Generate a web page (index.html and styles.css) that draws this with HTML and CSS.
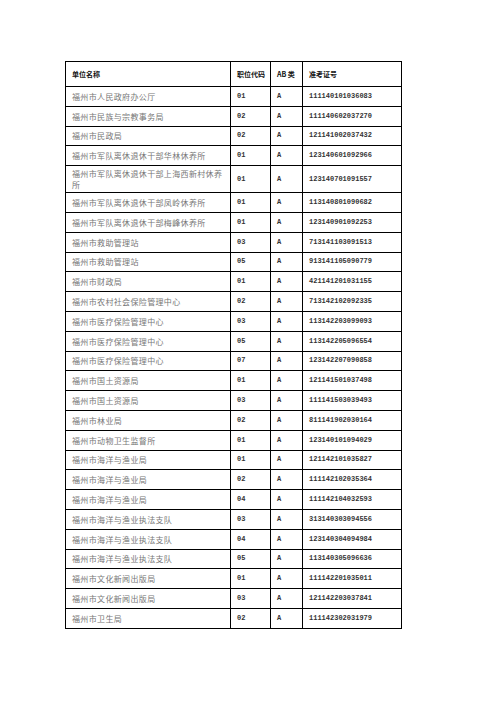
FILE: index.html
```html
<!DOCTYPE html>
<html lang="zh-CN">
<head>
<meta charset="utf-8">
<title>职位表</title>
<link rel="stylesheet" href="styles.css">
</head>
<body>
<table class="sheet">
  <colgroup>
    <col class="c-name"><col class="c-code"><col class="c-ab"><col class="c-no">
  </colgroup>
  <thead>
    <tr><th>单位名称</th><th>职位代码</th><th>AB 类</th><th>准考证号</th></tr>
  </thead>
  <tbody>
    <tr><td class="name">福州市人民政府办公厅</td><td class="num">01</td><td class="num">A</td><td class="num">111140101036083</td></tr>
    <tr><td class="name">福州市民族与宗教事务局</td><td class="num">02</td><td class="num">A</td><td class="num">111140602037270</td></tr>
    <tr><td class="name">福州市民政局</td><td class="num">02</td><td class="num">A</td><td class="num">121141002037432</td></tr>
    <tr><td class="name">福州市军队离休退休干部华林休养所</td><td class="num">01</td><td class="num">A</td><td class="num">123140601092966</td></tr>
    <tr class="tall"><td class="name">福州市军队离休退休干部上海西新村休养所</td><td class="num">01</td><td class="num">A</td><td class="num">123140701091557</td></tr>
    <tr><td class="name">福州市军队离休退休干部凤岭休养所</td><td class="num">01</td><td class="num">A</td><td class="num">113140801090682</td></tr>
    <tr><td class="name">福州市军队离休退休干部梅峰休养所</td><td class="num">01</td><td class="num">A</td><td class="num">123140901092253</td></tr>
    <tr><td class="name">福州市救助管理站</td><td class="num">03</td><td class="num">A</td><td class="num">713141103091513</td></tr>
    <tr><td class="name">福州市救助管理站</td><td class="num">05</td><td class="num">A</td><td class="num">913141105090779</td></tr>
    <tr><td class="name">福州市财政局</td><td class="num">01</td><td class="num">A</td><td class="num">421141201031155</td></tr>
    <tr><td class="name">福州市农村社会保险管理中心</td><td class="num">02</td><td class="num">A</td><td class="num">713142102092335</td></tr>
    <tr><td class="name">福州市医疗保险管理中心</td><td class="num">03</td><td class="num">A</td><td class="num">113142203099093</td></tr>
    <tr><td class="name">福州市医疗保险管理中心</td><td class="num">05</td><td class="num">A</td><td class="num">113142205096554</td></tr>
    <tr><td class="name">福州市医疗保险管理中心</td><td class="num">07</td><td class="num">A</td><td class="num">123142207090858</td></tr>
    <tr><td class="name">福州市国土资源局</td><td class="num">01</td><td class="num">A</td><td class="num">121141501037498</td></tr>
    <tr><td class="name">福州市国土资源局</td><td class="num">03</td><td class="num">A</td><td class="num">111141503039493</td></tr>
    <tr><td class="name">福州市林业局</td><td class="num">02</td><td class="num">A</td><td class="num">811141902030164</td></tr>
    <tr><td class="name">福州市动物卫生监督所</td><td class="num">01</td><td class="num">A</td><td class="num">123140101094029</td></tr>
    <tr><td class="name">福州市海洋与渔业局</td><td class="num">01</td><td class="num">A</td><td class="num">121142101035827</td></tr>
    <tr><td class="name">福州市海洋与渔业局</td><td class="num">02</td><td class="num">A</td><td class="num">111142102035364</td></tr>
    <tr><td class="name">福州市海洋与渔业局</td><td class="num">04</td><td class="num">A</td><td class="num">111142104032593</td></tr>
    <tr><td class="name">福州市海洋与渔业执法支队</td><td class="num">03</td><td class="num">A</td><td class="num">313140303094556</td></tr>
    <tr><td class="name">福州市海洋与渔业执法支队</td><td class="num">04</td><td class="num">A</td><td class="num">123140304094984</td></tr>
    <tr><td class="name">福州市海洋与渔业执法支队</td><td class="num">05</td><td class="num">A</td><td class="num">113140305096636</td></tr>
    <tr><td class="name">福州市文化新闻出版局</td><td class="num">01</td><td class="num">A</td><td class="num">111142201035011</td></tr>
    <tr><td class="name">福州市文化新闻出版局</td><td class="num">03</td><td class="num">A</td><td class="num">121142203037841</td></tr>
    <tr><td class="name">福州市卫生局</td><td class="num">02</td><td class="num">A</td><td class="num">111142302031979</td></tr>
  </tbody>
</table>
</body>
</html>
```
FILE: styles.css
```css
html, body {
  margin: 0;
  padding: 0;
  background: #ffffff;
}

.sheet {
  margin: 61px 0 0 65px;
  width: 336px;
  border-collapse: collapse;
  table-layout: fixed;
  font-family: "Noto Sans CJK SC", "Liberation Sans", sans-serif;
}

.c-name { width: 165px; }
.c-code { width: 40px; }
.c-ab { width: 32px; }
.c-no { width: 99px; }

.sheet th,
.sheet td {
  border: 1px solid #000;
  padding: 2px 3px 2px 6px;
  text-align: left;
  vertical-align: middle;
}

.sheet th {
  height: 20px;
  font-size: 7px;
  font-weight: 700;
  color: #111;
  line-height: 10px;
  white-space: nowrap;
  overflow: hidden;
}

.sheet td {
  height: 14.8px;
  line-height: 11px;
}

.name {
  font-size: 8px;
  letter-spacing: 0.35px;
  color: #777;
  font-weight: 400;
}

.num {
  font-family: "Liberation Mono", "DejaVu Sans Mono", monospace;
  font-size: 7px;
  font-weight: 700;
  color: #333;
}

.tall td {
  height: auto;
}
```
